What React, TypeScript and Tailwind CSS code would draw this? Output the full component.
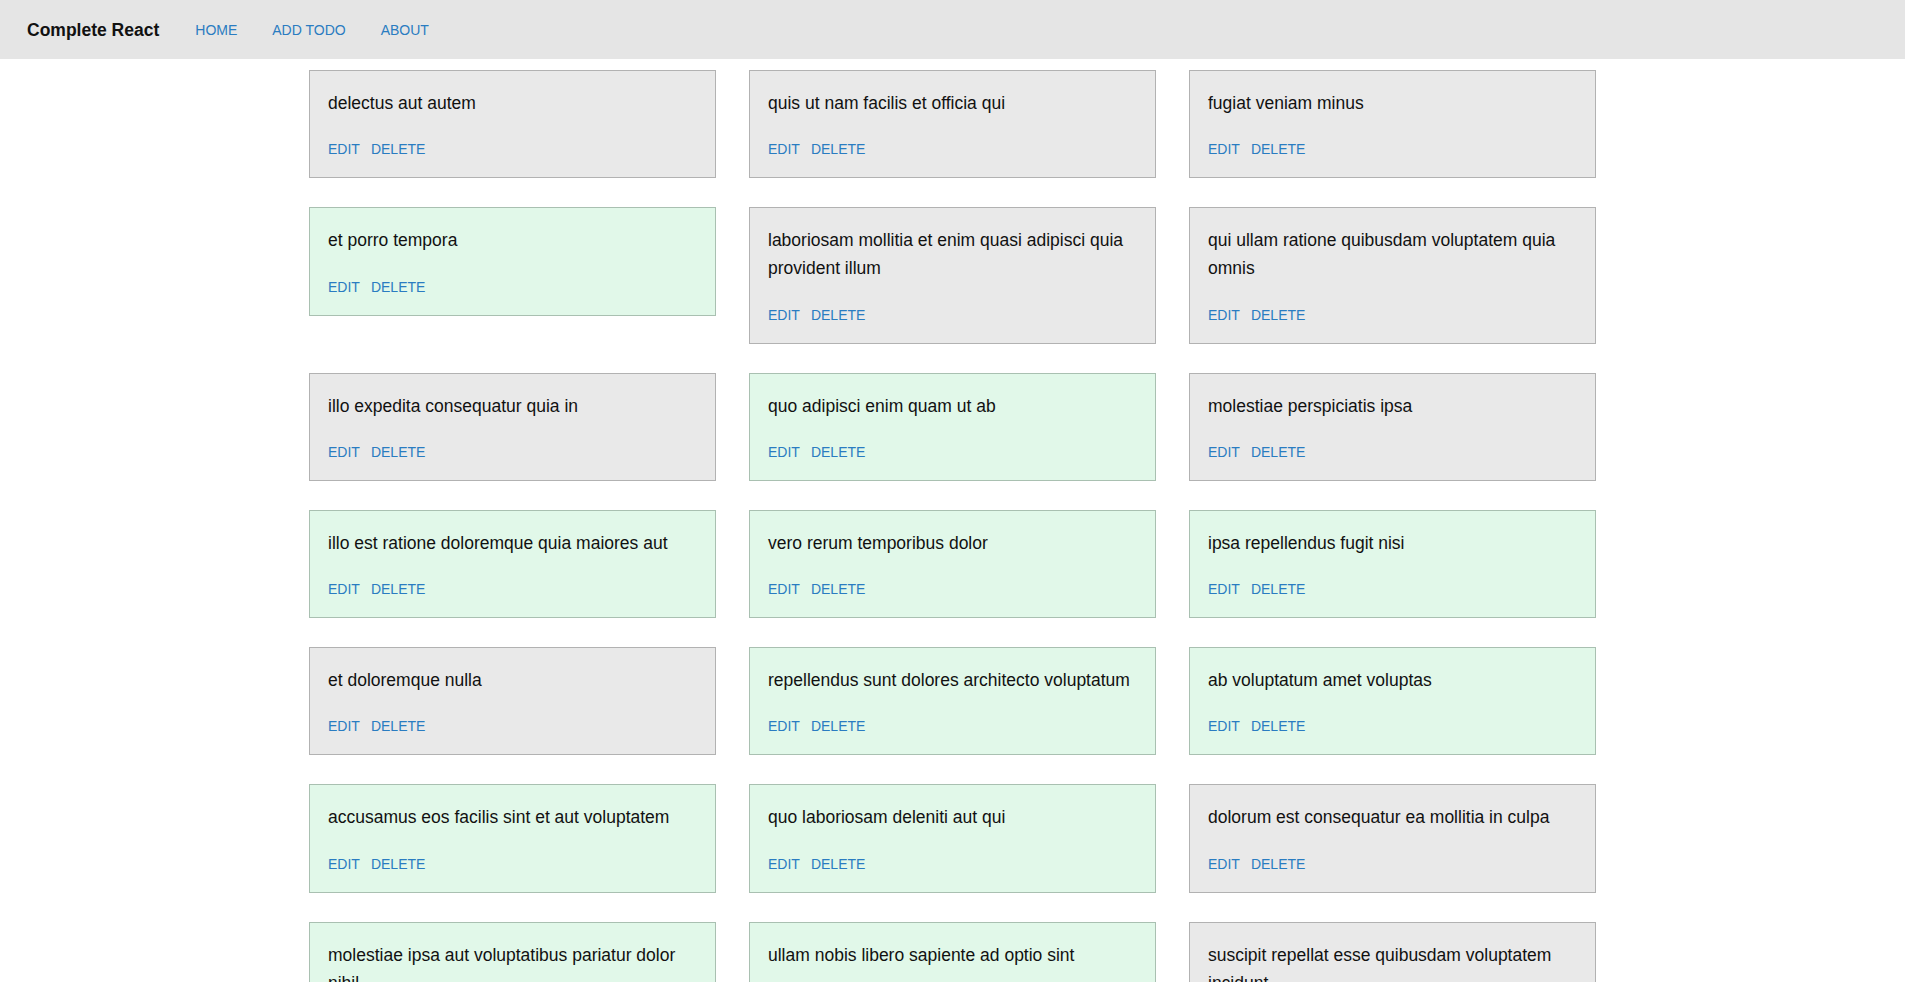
import React from "react";

const todos: { title: string; done: boolean }[] = [
  { title: "delectus aut autem", done: false },
  { title: "quis ut nam facilis et officia qui", done: false },
  { title: "fugiat veniam minus", done: false },
  { title: "et porro tempora", done: true },
  { title: "laboriosam mollitia et enim quasi adipisci quia provident illum", done: false },
  { title: "qui ullam ratione quibusdam voluptatem quia omnis", done: false },
  { title: "illo expedita consequatur quia in", done: false },
  { title: "quo adipisci enim quam ut ab", done: true },
  { title: "molestiae perspiciatis ipsa", done: false },
  { title: "illo est ratione doloremque quia maiores aut", done: true },
  { title: "vero rerum temporibus dolor", done: true },
  { title: "ipsa repellendus fugit nisi", done: true },
  { title: "et doloremque nulla", done: false },
  { title: "repellendus sunt dolores architecto voluptatum", done: true },
  { title: "ab voluptatum amet voluptas", done: true },
  { title: "accusamus eos facilis sint et aut voluptatem", done: true },
  { title: "quo laboriosam deleniti aut qui", done: true },
  { title: "dolorum est consequatur ea mollitia in culpa", done: false },
  { title: "molestiae ipsa aut voluptatibus pariatur dolor nihil", done: true },
  { title: "ullam nobis libero sapiente ad optio sint", done: true },
  { title: "suscipit repellat esse quibusdam voluptatem incidunt", done: false },
];

function Card({ title, done }: { title: string; done: boolean }) {
  return (
    <div
      className={
        done
          ? "border border-[#a9c0b1] bg-[#e1f8e9] px-[18px] pt-[18px] pb-[17px]"
          : "border border-[#b2b2b2] bg-[#e9e9e9] px-[18px] pt-[18px] pb-[17px]"
      }
    >
      <p className="text-[17.5px] leading-[28px] text-[#111]">{title}</p>
      <div className="mt-[22.3px] flex gap-[11px] text-[14px] leading-[21px] text-[#2a7cc1]">
        <a href="#" className="cursor-pointer">EDIT</a>
        <a href="#" className="cursor-pointer">DELETE</a>
      </div>
    </div>
  );
}

export default function App() {
  return (
    <div className="min-h-screen bg-white font-['Liberation_Sans',Arial,sans-serif]">
      <header className="flex h-[58.7px] items-center bg-[#e5e5e5] px-[27px] pt-[2px]">
        <span className="text-[17.5px] font-bold text-[#111]">Complete React</span>
        <nav className="ml-[36px] flex gap-[35px] text-[14px] text-[#2a7cc1]">
          <a href="#">HOME</a>
          <a href="#">ADD TODO</a>
          <a href="#">ABOUT</a>
        </nav>
      </header>
      <main className="mx-auto mt-[11.3px] grid w-[1287px] grid-cols-3 items-start gap-x-[33px] gap-y-[29px] pb-8">
        {todos.map((t, i) => (
          <Card key={i} title={t.title} done={t.done} />
        ))}
      </main>
    </div>
  );
}
